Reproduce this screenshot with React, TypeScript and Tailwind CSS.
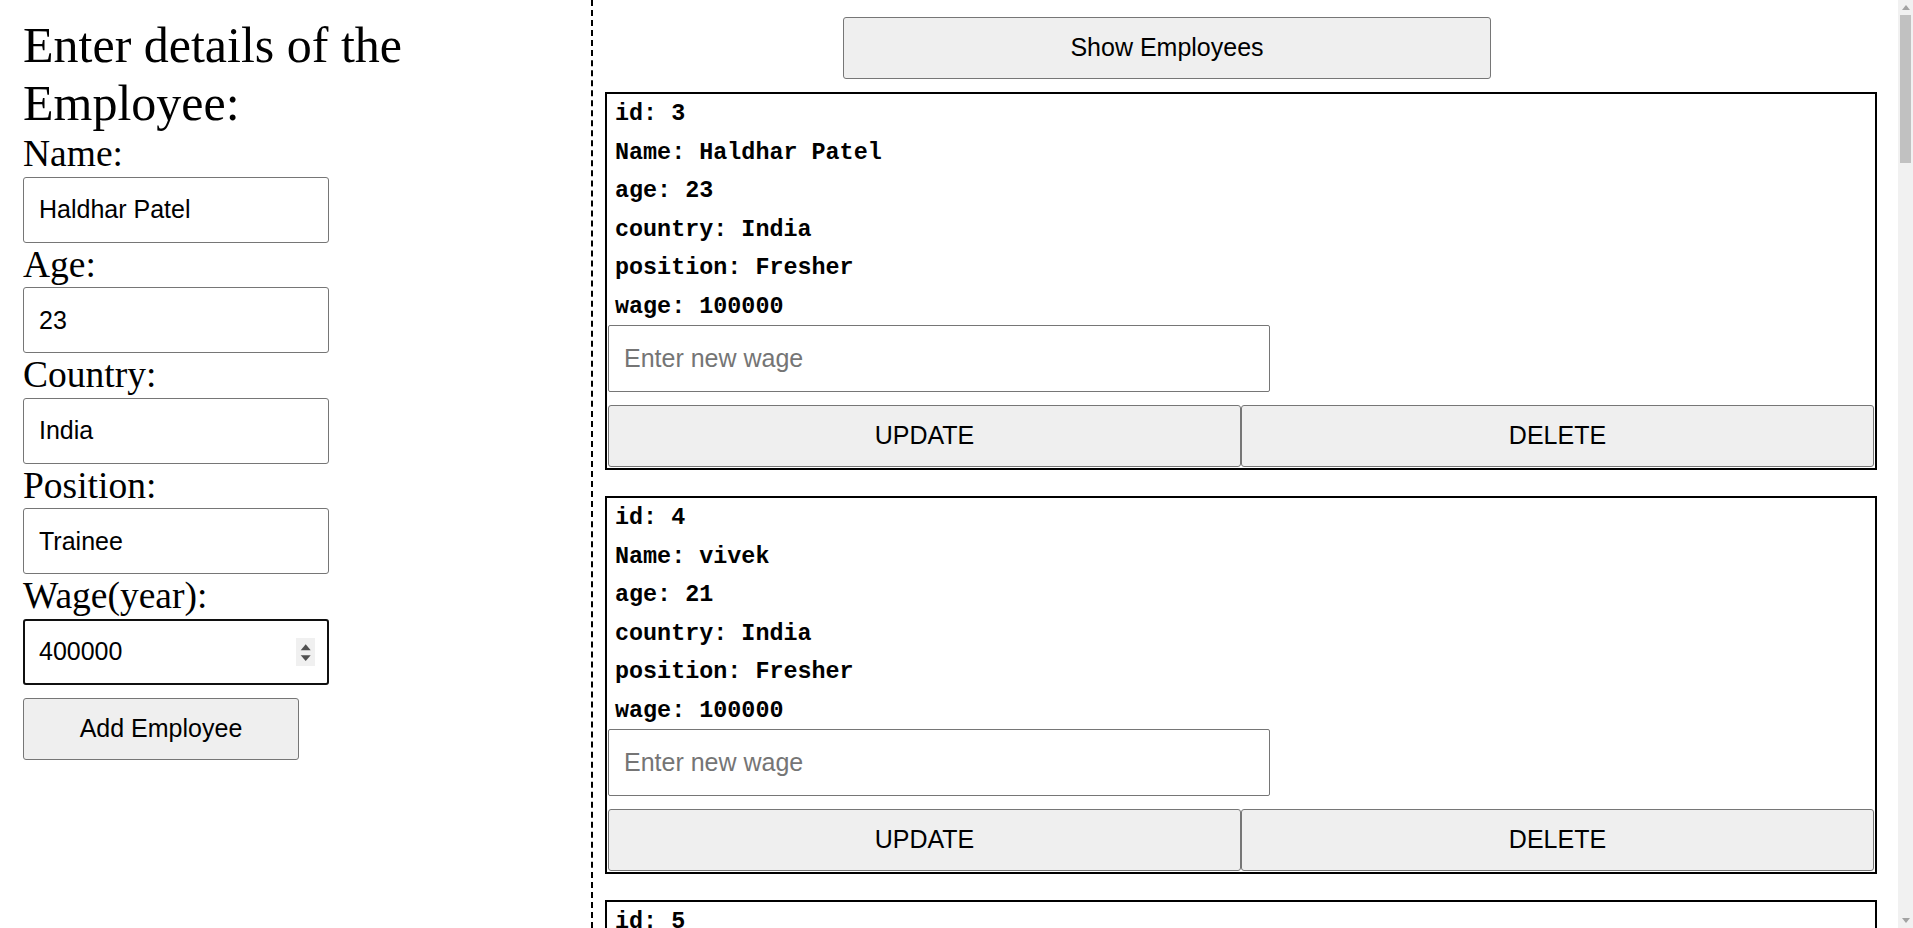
import React from 'react';

type Employee = {
  id: number;
  name: string;
  age: number;
  country: string;
  position: string;
  wage: number;
};

const employees: Employee[] = [
  { id: 3, name: 'Haldhar Patel', age: 23, country: 'India', position: 'Fresher', wage: 100000 },
  { id: 4, name: 'vivek', age: 21, country: 'India', position: 'Fresher', wage: 100000 },
  { id: 5, name: 'rahul', age: 22, country: 'India', position: 'Fresher', wage: 100000 },
];

const btn =
  "rounded-[3px] border border-[#767676] bg-[#efefef] font-['Liberation_Sans',Arial,sans-serif] text-[25px] text-black";

const field =
  "block h-[66px] w-[306px] rounded-[3px] border border-[#767676] bg-white px-[15px] font-['Liberation_Sans',Arial,sans-serif] text-[25px] text-black outline-none placeholder:text-[#757575]";

function Field({ label, value }: { label: string; value: string }) {
  return (
    <>
      <label className="block text-[37.5px] leading-[44.5px]">{label}</label>
      <input className={field} defaultValue={value} />
    </>
  );
}

// fake chrome scrollbar on the right edge
function Scrollbar() {
  return (
    <div className="flex w-[15px] shrink-0 flex-col bg-[#f1f1f1]">
      <div className="flex h-[15px] items-center justify-center">
        <svg width="8" height="5" viewBox="0 0 8 5">
          <polygon points="0,5 4,0 8,5" fill="#a3a3a3" />
        </svg>
      </div>
      <div className="mx-[2px] h-[148px] bg-[#c1c1c1]" />
      <div className="flex-1" />
      <div className="flex h-[15px] items-center justify-center">
        <svg width="8" height="5" viewBox="0 0 8 5">
          <polygon points="0,0 8,0 4,5" fill="#a3a3a3" />
        </svg>
      </div>
    </div>
  );
}

function EmployeeCard({ e }: { e: Employee }) {
  return (
    <div className="mb-[26px] border-2 border-black">
      <div className="relative top-[1px] px-[8px] font-['Liberation_Mono','Courier_New',monospace] text-[23.4px] font-bold leading-[38.5px] text-black">
        <div>id: {e.id}</div>
        <div>Name: {e.name}</div>
        <div>age: {e.age}</div>
        <div>country: {e.country}</div>
        <div>position: {e.position}</div>
        <div>wage: {e.wage}</div>
      </div>
      <input
        className="ml-[1px] block h-[67px] w-[662px] rounded-[2px] border border-[#767676] bg-white px-[15px] font-['Liberation_Sans',Arial,sans-serif] text-[25px] text-black outline-none placeholder:text-[#757575]"
        placeholder="Enter new wage"
      />
      <div className="mb-[1px] mt-[13px] flex px-[1px]">
        <button className={`h-[62px] flex-1 ${btn}`}>UPDATE</button>
        <button className={`h-[62px] flex-1 ${btn}`}>DELETE</button>
      </div>
    </div>
  );
}

export default function App() {
  return (
    <div className="flex h-[928px] w-full overflow-hidden bg-white font-['Liberation_Serif','Times_New_Roman',serif] text-black">
      <div className="flex min-w-0 flex-1">
        {/* form column */}
        <div className="w-[591px] shrink-0 pl-[23px] pt-[17px]">
          <h1 className="text-[50px] font-normal leading-[57.5px]">Enter details of the Employee:</h1>
          <Field label="Name:" value="Haldhar Patel" />
          <Field label="Age:" value="23" />
          <Field label="Country:" value="India" />
          <Field label="Position:" value="Trainee" />
          <label className="block text-[37.5px] leading-[44.5px]">Wage(year):</label>
          <div className="relative w-[306px]">
            <input
              className="block h-[66px] w-[306px] rounded-[3px] border-2 border-[#101010] bg-white px-[14px] font-['Liberation_Sans',Arial,sans-serif] text-[25px] text-black outline-none"
              defaultValue="400000"
            />
            {/* number spinner */}
            <div className="absolute left-[273px] top-[19px] h-[28px] w-[19px] bg-[#f0f0f0]">
              <svg width="19" height="28" viewBox="0 0 19 28">
                <polygon points="4.7,12.3 9.7,6.3 14.7,12.3" fill="#505050" />
                <polygon points="4.7,17.3 14.7,17.3 9.7,23" fill="#505050" />
              </svg>
            </div>
          </div>
          <button className={`mt-[13px] h-[62px] w-[276px] ${btn}`}>Add Employee</button>
        </div>

        {/* list column */}
        <div className="min-w-0 flex-1 border-l-2 border-dashed border-black pl-[12px] pr-[21px]">
          <button className={`ml-[238px] mt-[17px] block h-[62px] w-[648px] ${btn}`}>Show Employees</button>
          <div className="mt-[13px]">
            {employees.map((e) => (
              <EmployeeCard key={e.id} e={e} />
            ))}
          </div>
        </div>
      </div>
      <Scrollbar />
    </div>
  );
}
